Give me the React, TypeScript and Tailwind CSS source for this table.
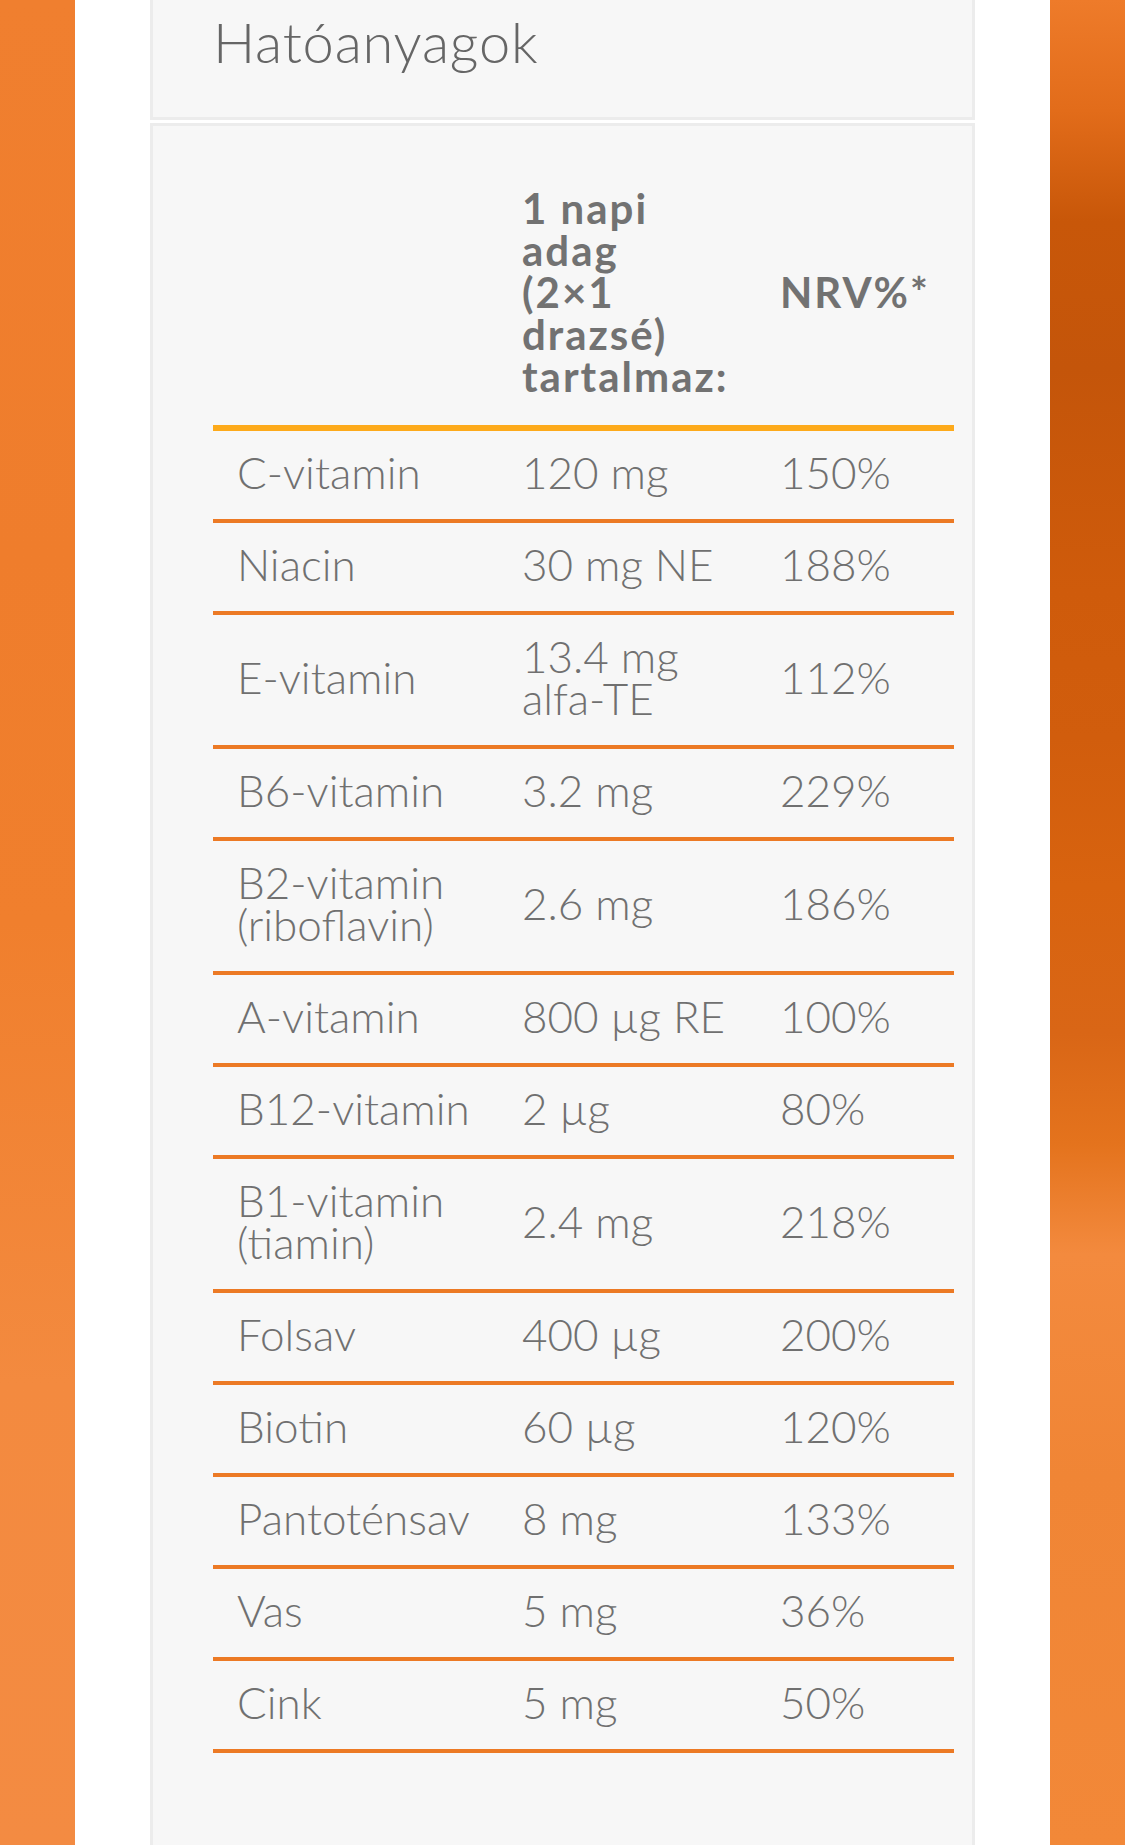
import React from "react";

const rows: [string, string, string][] = [
  ["C-vitamin", "120 mg", "150%"],
  ["Niacin", "30 mg NE", "188%"],
  ["E-vitamin", "13.4 mg alfa-TE", "112%"],
  ["B6-vitamin", "3.2 mg", "229%"],
  ["B2-vitamin (riboflavin)", "2.6 mg", "186%"],
  ["A-vitamin", "800 µg RE", "100%"],
  ["B12-vitamin", "2 µg", "80%"],
  ["B1-vitamin (tiamin)", "2.4 mg", "218%"],
  ["Folsav", "400 µg", "200%"],
  ["Biotin", "60 µg", "120%"],
  ["Pantoténsav", "8 mg", "133%"],
  ["Vas", "5 mg", "36%"],
  ["Cink", "5 mg", "50%"],
];

export default function App() {
  return (
    <div
      className="flex min-h-[1845px] w-[1125px] bg-white"
      style={{ fontFamily: "Lato, 'Open Sans', sans-serif" }}
    >
      <div className="w-[75px] shrink-0 bg-[linear-gradient(to_bottom,#f07f2f_0%,#ef7d2c_30%,#f07f2d_50%,#f38a3f_75%,#f38b42_100%)]" />
      <div className="w-[75px] shrink-0 bg-white" />
      <div className="flex w-[825px] shrink-0 flex-col gap-[3px]">
        <div className="h-[120px] border-x-[3px] border-b-[3px] border-[#ececec] bg-[#f7f7f7] pl-[60px] pt-[8px]">
          <h2 className="text-[56px] font-light leading-[67px] tracking-[0.8px] text-[#666666]">Hatóanyagok</h2>
        </div>
        <div className="flex-1 border-x-[3px] border-t-[3px] border-[#ececec] bg-[#f7f7f7] pl-[60px] pr-[18px] pt-[41px]">
          <div className="w-[741px]">
            <div className="grid grid-cols-[285px_258px_1fr] items-center border-b-[6px] border-[#fdaa1b] pb-[28px] pt-[20px] text-[42px] font-bold leading-[42px] tracking-[2px] text-[#727272]">
              <div className="pl-[24px]" />
              <div className="pl-[24px]">
                1 napi
                <br />
                adag
                <br />
                (2×1
                <br />
                drazsé)
                <br />
                tartalmaz:
              </div>
              <div className="pl-[24px]">NRV%*</div>
            </div>
            {rows.map(([name, amount, nrv]) => (
              <div
                key={name}
                className="grid grid-cols-[285px_258px_1fr] items-center border-b-4 border-[#ec7a25] pb-[26px] pt-[20px] text-[44px] font-light leading-[42px] text-[#707070]"
              >
                <div className="pl-[24px]">{name}</div>
                <div className="pl-[24px]">{amount}</div>
                <div className="pl-[24px]">{nrv}</div>
              </div>
            ))}
          </div>
        </div>
      </div>
      <div className="w-[75px] shrink-0 bg-white" />
      <div className="w-[75px] shrink-0 bg-[linear-gradient(to_bottom,#ee7b2a_0%,#e26c1a_6%,#c85709_12%,#c4550a_20%,#cf5b0b_32%,#d15d0d_40%,#d8630f_48%,#d96616_56%,#e4731d_62%,#f38a3e_68%,#f08535_80%,#f28838_100%)]" />
    </div>
  );
}
